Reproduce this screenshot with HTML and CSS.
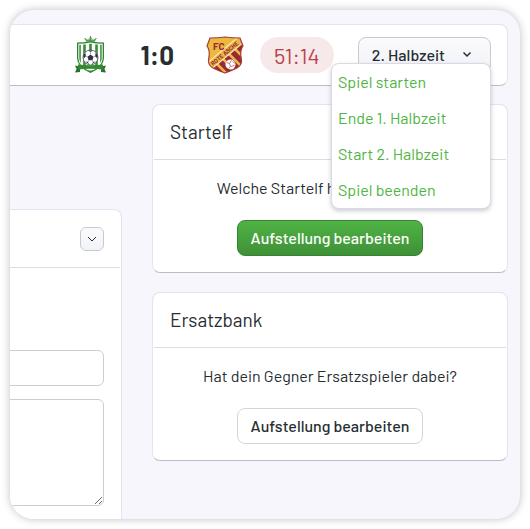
FILE: index.html
```html
<!DOCTYPE html>
<html lang="de">
    <head>
        <meta charset="utf-8">
        <meta name="viewport" content="width=device-width, initial-scale=1">
        <title>Liveticker</title>
        <link rel="stylesheet" href="styles.css">
    </head>
    <body>
        <div class="app">
            <header class="scorebar">
                <svg class="crest-home" viewBox="0 0 32 38" role="img" aria-label="Heim">
                    <path d="M11 5.500L9.500 2l3.500 1.500L15.500 0 18 3.500 21.500 2 20 5.500z" fill="#8fbf8b"/>
                    <path d="M11 5q4.500-1 9 0M9.500 2l2.500 3M21.500 2L19 5M15.500 0v4" fill="none" stroke="#3f8f3b" stroke-width=".8"/>
                    <path d="M2 6.500q7 0 13.500-1.500Q22 6.500 29 6.500V22q0 9-13.500 15Q2 31 2 22z" fill="#2e842e"/>
                    <path d="M3.300 7.800q6.500 0 12.200-1.400 5.700 1.400 12.200 1.400V22q0 8.500-12.200 13.500Q3.300 30.500 3.300 22z" fill="#fff"/>
                    <path d="M4.300 8.800h1.500V27q-1.500-2-1.500-5zM8.200 8.500h2.600V30H8.200zM14.200 7.800h2.600v20h-2.600zM20.200 8.500h2.600V30h-2.600zM25.200 8.800h1.500V22q0 3-1.500 5z" fill="#358c32"/>
                    <circle cx="15.500" cy="21.500" r="7.500" fill="#fff" stroke="#4a4d56" stroke-width=".8"/>
                    <path d="M15.500 18.500l3 2.200-1.100 3.600h-3.800l-1.100-3.600zM13 14.500h5l-2.500 1.600zM8.300 19l2.200-2 .3 3.500-2.300 2zM22.700 19l-2.200-2-.3 3.500 2.300 2zM10.500 25.500l2.500.5 1 2.500zM20.500 25.500l-2.500.5-1 2.500z" fill="#303340"/>
                    <path d="M15.500 16v2.500M10.700 20l1.800.7M20.300 20l-1.800.7M13.600 24.300L13 26M17.400 24.300L18 26" stroke="#70737c" stroke-width=".6"/>
                    <path d="M0 29.500l5 1v5.500l-5 .500 1.500-3.500zM31 29.500l-5 1v5.500l5 .5-1.500-3.500z" fill="#2b732b"/>
                    <path d="M3 28.500q12.500 1.500 25 0v5q-12.500-1.500-25 0z" fill="#338b30"/>
                    <path d="M12 34.500h7l-3.500 2z" fill="#338b30"/>
                </svg>
                <strong class="score">1:0</strong>
                <svg class="crest-away" viewBox="0 0 38 38" role="img" aria-label="FC Rote Asche">
                    <defs>
                        <clipPath id="shield">
                            <path d="M4 2q8 0 15-1 7 1 15 1l3 8q-3 4-2 11 2 8-4 11-6 3-12 5-6-2-12-5-6-3-4-11 1-7-2-11z"/>
                        </clipPath>
                    </defs>
                    <g clip-path="url(#shield)">
                        <path d="M0 0h38v38H0z" fill="#edb83f"/>
                        <path d="M2 34L36 6v32H2z" fill="#98293a"/>
                        <path d="M10 27l13 13M16 22l18 18M22 17l18 18M28 12l12 12" stroke="#edb83f" stroke-width="2.500"/>
                        <path d="M1 32L37 2" stroke="#fff1ca" stroke-width="8.500"/>
                        <path d="M1 32L37 2" stroke="#edb83f" stroke-width="6.500"/>
                    </g>
                    <path d="M4 2q8 0 15-1 7 1 15 1l3 8q-3 4-2 11 2 8-4 11-6 3-12 5-6-2-12-5-6-3-4-11 1-7-2-11z" fill="none" stroke="#a63b35" stroke-width="1.200"/>
                    <text class="crest-club" x="7" y="14">FC</text>
                    <text class="crest-name" x="7" y="30" transform="rotate(-40 7 30)">ROTE ASCHE</text>
                    <circle cx="24.500" cy="28.500" r="5" fill="#fff"/>
                    <path d="M20.500 26.500l3 1 2-3m-2 3l1 3 4-1m-4 1l-2 2m4-7l3 2" fill="none" stroke="#ba5966" stroke-width=".8"/>
                </svg>
                <span class="clock">51:14</span>
                <div class="dropdown">
                    <button class="btn btn-period" type="button" aria-expanded="true" aria-controls="period-menu">
                        2. Halbzeit
                        <svg class="chevron" viewBox="0 0 10 10" aria-hidden="true"><path d="M1.500 2.500L5 6 8.500 2.500"/></svg>
                    </button>
                    <nav class="menu" id="period-menu">
                        <a href="#">Spiel starten</a>
                        <a href="#">Ende 1. Halbzeit</a>
                        <a href="#">Start 2. Halbzeit</a>
                        <a href="#">Spiel beenden</a>
                    </nav>
                </div>
            </header>
            <main class="content">
                <section class="card entry">
                    <div class="card-head entry-head">
                        <button class="btn-toggle" type="button" aria-label="Einklappen">
                            <svg class="chevron" viewBox="0 0 10 10" aria-hidden="true"><path d="M1 3l4 4 4-4"/></svg>
                        </button>
                    </div>
                    <form class="entry-form">
                        <input class="field" type="text" aria-label="Titel">
                        <textarea class="field field-text" aria-label="Text"></textarea>
                    </form>
                </section>
                <div class="lineups">
                    <section class="card">
                        <h2 class="card-head">Startelf</h2>
                        <div class="card-body">
                            <p>Welche Startelf hat dein Gegner?</p>
                            <button class="btn btn-primary" type="button">Aufstellung bearbeiten</button>
                        </div>
                    </section>
                    <section class="card">
                        <h2 class="card-head">Ersatzbank</h2>
                        <div class="card-body">
                            <p>Hat dein Gegner Ersatzspieler dabei?</p>
                            <button class="btn" type="button">Aufstellung bearbeiten</button>
                        </div>
                    </section>
                </div>
            </main>
        </div>
    </body>
</html>
```

FILE: styles.css
```css
*{
    box-sizing: border-box;
}
body{
    margin: 0;
    padding: 10px;
    background: #fff;
    color: #272e31;
    font: 16px/24px Barlow, Roboto, sans-serif;
}
button, input, textarea{
    font: inherit;
    color: inherit;
}
.app{
    display: flex;
    flex-direction: column;
    height: calc(100vh - 20px);
    padding-top: 14px;
    overflow: hidden;
    background: #f7f6fc;
    border-radius: 24px;
    box-shadow: 0 0 8px rgba(0, 0, 0, 0.25);
}
.scorebar{
    display: flex;
    align-items: center;
    justify-content: flex-end;
    margin-right: 12px;
    padding: 11px 16px;
    background: #fff;
    border: 1px solid #e3e4ec;
    border-bottom-color: #b9bec6;
    border-left: 0;
    border-radius: 0 8px 8px 0;
}
.crest-home{
    width: 32px;
    height: 38px;
}
.score{
    margin: 0 32px 0 34px;
    font-size: 26px;
}
.crest-away{
    width: 38px;
    height: 38px;
}
.crest-club{
    font-size: 10px;
    font-weight: bold;
    fill: #98293a;
}
.crest-name{
    font-size: 6px;
    font-weight: bold;
    fill: #98293a;
}
.clock{
    margin: 0 24px 0 16px;
    padding: 0 14px;
    background: #f7e9ea;
    border-radius: 18px;
    color: #b8434d;
    font-size: 22px;
    line-height: 36px;
}
.dropdown{
    position: relative;
}
.btn{
    height: 36px;
    padding: 0 13px;
    background: #fff;
    border: 1px solid #d4d5d8;
    border-radius: 8px;
    font-weight: 600;
    cursor: pointer;
}
.btn-period{
    display: flex;
    align-items: center;
    gap: 17px;
    padding-right: 18px;
    background: linear-gradient(#fafafc, #f2f3f7);
    border-color: #c5c9d0;
    font-weight: 500;
}
.btn-primary{
    background: linear-gradient(#50b345, #3f9137);
    border-color: #398234;
    color: #fff;
}
.card-body .btn{
    font-weight: 500;
}
.chevron{
    width: 10px;
    height: 10px;
    fill: none;
    stroke: #272e31;
    stroke-width: 1.5;
}
.menu{
    position: absolute;
    top: 26px;
    right: 0;
    z-index: 1;
    width: 160px;
    background: #fff;
    border: 1px solid #d9dae3;
    border-radius: 8px;
    box-shadow: 0 2px 4px rgba(50, 50, 90, 0.25);
}
.menu a{
    display: block;
    padding: 6px;
    color: #4fb443;
    text-decoration: none;
}
.menu a:hover{
    text-decoration: underline;
}
.content{
    flex: 1;
    display: grid;
    grid-template-columns: 112px 1fr;
    gap: 30px;
    padding: 18px 12px 0 0;
}
.card{
    background: #fff;
    border: 1px solid #e3e4ec;
    border-bottom-color: #b9bec6;
    border-radius: 8px;
}
.card-head{
    margin: 0 1px;
    padding: 15px 16px;
    border-bottom: 1px solid #dcdde0;
    font-size: 19px;
    font-weight: normal;
}
.card-body{
    padding: 16px;
    text-align: center;
}
.card-body p{
    margin: 0 0 20px;
}
/* the entry panel starts outside the left edge */
.entry{
    margin: 105px 0 -20px -30px;
}
.entry-head{
    display: flex;
    justify-content: flex-end;
    padding: 17px 16px 16px;
}
.btn-toggle{
    display: flex;
    align-items: center;
    justify-content: center;
    width: 24px;
    height: 24px;
    padding: 0;
    background: linear-gradient(#fafafc, #f2f3f7);
    border: 1px solid #c5c9d0;
    border-radius: 6px;
    cursor: pointer;
}
.btn-toggle .chevron{
    stroke-width: 1;
}
.entry-form{
    display: flex;
    flex-direction: column;
    gap: 13px;
    padding: 82px 17px 13px;
}
.field{
    width: 100%;
    height: 36px;
    border: 1px solid #cbcdd0;
    border-radius: 6px;
    background: #fff;
}
.field-text{
    height: 107px;
}
.lineups{
    display: flex;
    flex-direction: column;
    gap: 19px;
}
```
